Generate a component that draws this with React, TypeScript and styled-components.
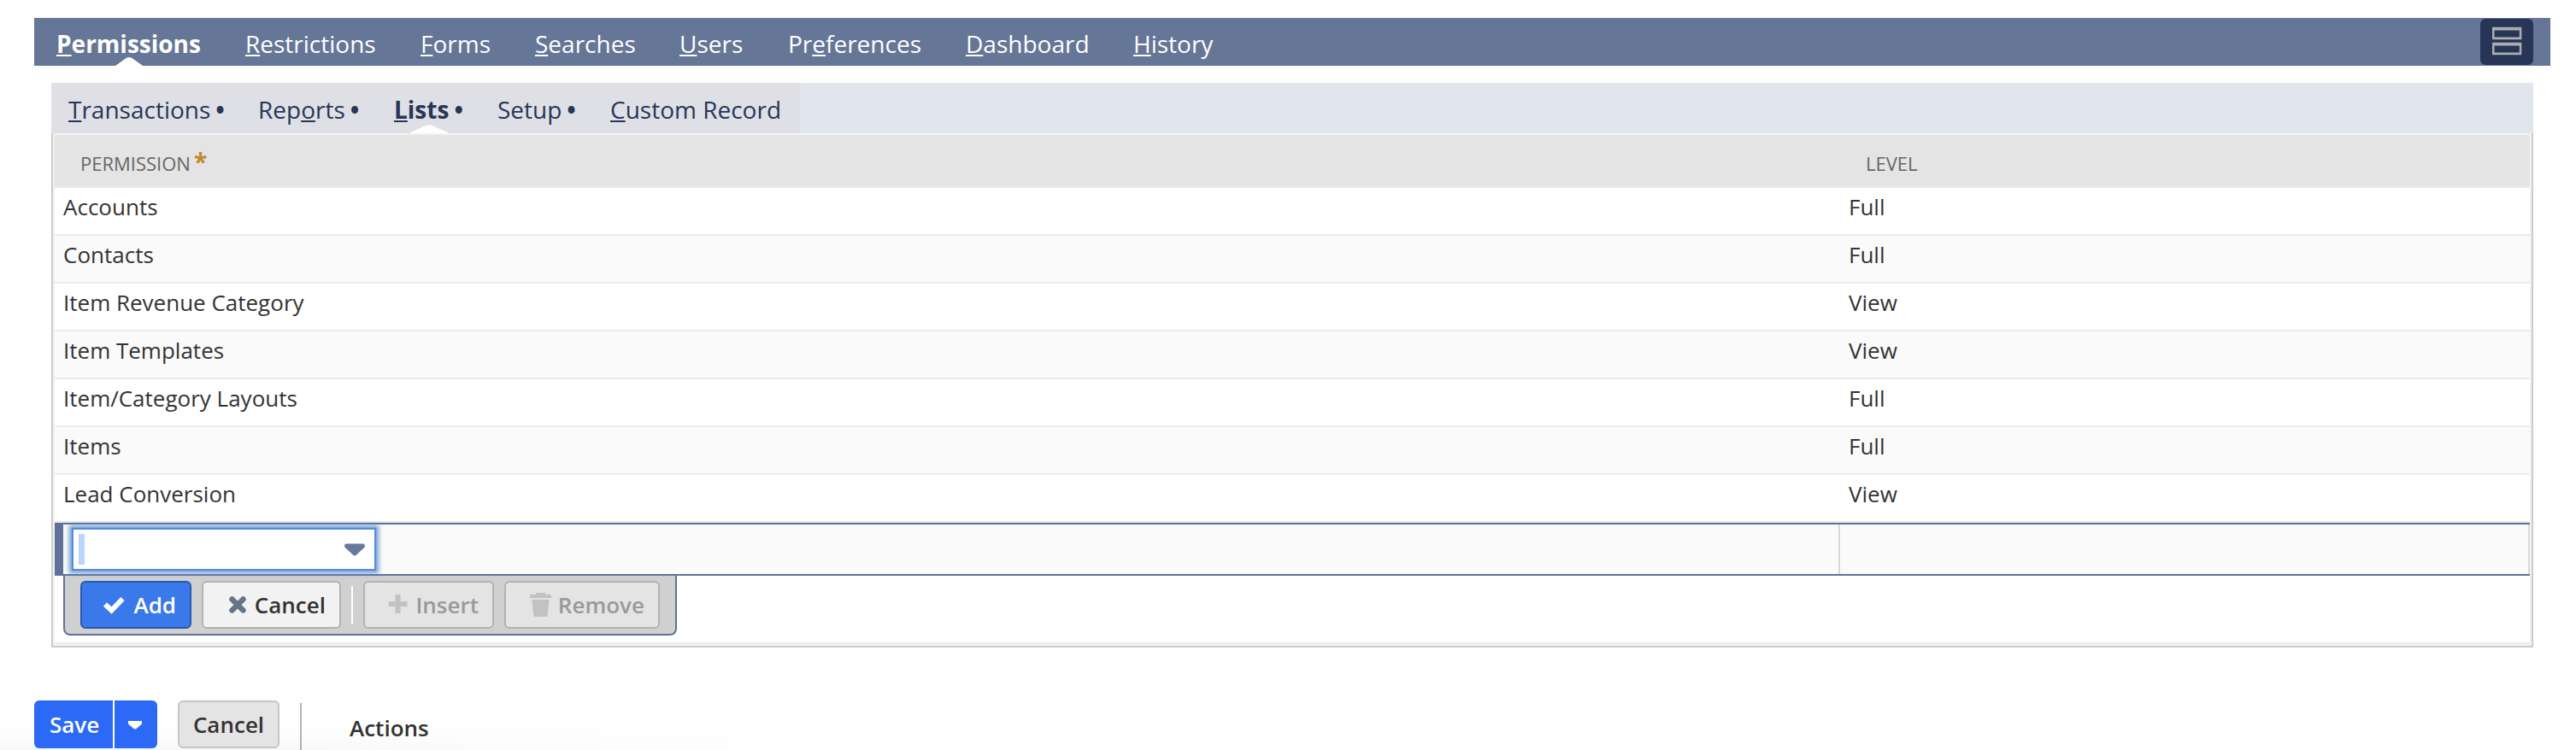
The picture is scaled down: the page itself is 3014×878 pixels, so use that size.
import React from "react";
import styled, { createGlobalStyle, css } from "styled-components";

const GlobalStyle = createGlobalStyle`
  *, *::before, *::after { box-sizing: border-box; }
  html, body { margin: 0; padding: 0; background: #fefefe; }
  body { font-family: "Open Sans", "Noto Sans", sans-serif; color: #333; overflow: hidden; }
  button, input { font-family: inherit; }
`;

const Page = styled.main`
  width: 3014px;
  height: 878px;
  padding: 21px 30px 0 40px;
  overflow: hidden;
  display: flex;
  flex-direction: column;
`;

const NavBar = styled.nav`
  display: flex;
  align-items: flex-start;
  height: 56px;
  padding-left: 26px;
  background: #667696;
`;

const Key = styled.u`
  text-decoration: underline;
  text-decoration-thickness: 2px;
  text-underline-offset: 2px;
  text-decoration-skip-ink: none;
`;

const NavItem = styled.a<{ $active?: boolean; $width: number }>`
  position: relative;
  width: ${(p) => p.$width}px;
  height: 56px;
  padding-top: 16px;
  line-height: 28px;
  font-size: 28px;
  font-weight: ${(p) => (p.$active ? 700 : 400)};
  color: #fff;
  white-space: nowrap;
`;

const Notch = styled.svg<{ $left: number }>`
  position: absolute;
  bottom: 0;
  left: ${(p) => p.$left}px;
`;

const LayoutToggle = styled.button`
  display: flex;
  align-items: flex-start;
  justify-content: flex-start;
  width: 62px;
  height: 54px;
  margin: 1px 20px 0 auto;
  padding: 9px 0 0 14px;
  border: 0;
  border-radius: 6px;
  background: #273657;
`;

const Panel = styled.section`
  margin: 20px 20px 0;
`;

const SubTabs = styled.div`
  height: 59px;
  background: #e0e5ee;
`;

const SubTabGroup = styled.div`
  display: flex;
  width: 876px;
  height: 59px;
  padding-left: 20px;
  background: #dfe0e5;
`;

const SubTab = styled.a<{ $active?: boolean; $width: number }>`
  position: relative;
  width: ${(p) => p.$width}px;
  padding-top: 17px;
  line-height: 28px;
  font-size: 28px;
  font-weight: ${(p) => (p.$active ? 700 : 400)};
  color: #273657;
  white-space: nowrap;
`;

const Bullet = styled.span`
  margin-left: 6px;
  font-weight: 700;
`;

const Sheet = styled.div`
  height: 602px;
  border: 2px solid #ccc;
  border-top: 0;
`;

const SheetInner = styled.div`
  height: 600px;
  border: 2px solid #f2f2f2;
`;

const Grid = styled.div`
  height: 596px;
  border-bottom: 2px solid #ebebeb;
  background: #fff;
`;

const HeadRow = styled.div`
  display: grid;
  grid-template-columns: 2089px 1fr;
  height: 62px;
  background: #e4e4e4;
  border-bottom: 2px solid #ebebeb;
`;

const HeadCell = styled.div`
  display: flex;
  padding: 17px 0 0 30px;
  font-size: 22px;
  line-height: 32px;
  color: #666;
`;

const Required = styled.span`
  margin: -2px 0 0 4px;
  font-size: 28px;
  line-height: 32px;
  font-weight: 700;
  color: #c2882a;
`;

const Row = styled.div<{ $shaded: boolean }>`
  display: grid;
  grid-template-columns: 2089px 1fr;
  height: 56px;
  background: ${(p) => (p.$shaded ? "#fafafa" : "#fff")};
  border-bottom: 2px solid #ebebeb;
`;

const Cell = styled.div`
  padding-left: 10px;
  line-height: 44px;
  font-size: 26px;
`;

const EditRow = styled.div`
  display: grid;
  grid-template-columns: 10px 2079px 1fr;
  height: 62px;
  background: #607199;
`;

const EditCell = styled.div`
  height: 62px;
  padding: 4px 10px;
  border: solid #607199;
  border-width: 2px 0;
  background: linear-gradient(#d9d9d9, #d9d9d9) right / 2px 100% no-repeat #fafafa;
`;

const Combo = styled.div`
  display: flex;
  align-items: flex-start;
  justify-content: space-between;
  width: 356px;
  height: 50px;
  padding: 5px 11px 0 6px;
  border: 2px solid #568dd5;
  background: #fff;
  box-shadow: 0 0 5px 3px rgba(86, 141, 213, 0.85);
`;

const Selection = styled.span`
  width: 7px;
  height: 36px;
  background: #bad6fc;
`;

const ComboArrow = styled.svg`
  margin-top: 11px;
`;

const Tools = styled.div`
  display: flex;
  align-items: flex-start;
  width: 718px;
  height: 70px;
  margin-left: 10px;
  padding: 6px 0 0 18px;
  border: 2px solid #607199;
  border-top: 0;
  border-radius: 0 0 8px 8px;
  background: #d0d0d0;
`;

type Tone = "primary" | "plain" | "disabled";

const tones = {
  primary: css`
    color: #fff;
    background: #3a79ea;
    border-color: #2858b0;
  `,
  plain: css`
    color: #333;
    background: #f2f2f2;
    border-color: #b2b2b2;
  `,
  disabled: css`
    color: #999;
    background: #e4e4e4;
    border-color: #b2b2b2;
  `,
};

const ToolButton = styled.button<{ $tone: Tone; $width: number; $gap: number }>`
  display: flex;
  align-items: center;
  justify-content: flex-end;
  gap: ${(p) => p.$gap}px;
  flex: none;
  width: ${(p) => p.$width}px;
  height: 56px;
  margin-right: 12px;
  padding: 0 16px 0 0;
  border: 2px solid;
  border-radius: 6px;
  font-size: 26px;
  font-weight: 600;
  line-height: 36px;
  ${(p) => tones[p.$tone]}
  svg { flex: none; }
`;

const Separator = styled.span`
  width: 2px;
  height: 44px;
  margin: 6px 12px 0 0;
  background: #fff;
`;

const Footer = styled.footer`
  display: flex;
  align-items: flex-start;
  height: 58px;
  margin: 62px -30px 0 -40px;
  padding-left: 40px;
  background:
    linear-gradient(90deg, rgba(254, 254, 254, 0) 40%, #fefefe) 0 100% / 860px 20px no-repeat,
    linear-gradient(#fefefe, #f8f8f8) 0 100% / 860px 20px no-repeat;
`;

const SaveGroup = styled.div`
  display: flex;
  gap: 2px;
  height: 56px;
  margin-right: 24px;
`;

const SaveButton = styled.button`
  width: 92px;
  padding: 0 0 0 2px;
  border: 0;
  border-radius: 6px 0 0 6px;
  background: #2b69f6;
  color: #fff;
  font-size: 26px;
  font-weight: 600;
`;

const SaveMenu = styled.button`
  display: flex;
  align-items: center;
  width: 50px;
  padding: 2px 0 0 16px;
  border: 0;
  border-radius: 0 6px 6px 0;
  background: #2b69f6;
`;

const CancelButton = styled.button`
  width: 119px;
  height: 56px;
  padding: 0;
  border: 2px solid #c6c6c6;
  border-radius: 6px;
  background: #e4e4e4;
  color: #333;
  font-size: 26px;
  font-weight: 600;
`;

const Divider = styled.span`
  width: 2px;
  height: 55px;
  margin: 3px 56px 0 24px;
  background: #b2b2b2;
`;

const Actions = styled.span`
  padding-top: 14px;
  font-size: 26px;
  line-height: 36px;
  font-weight: 600;
`;

type Label = { pre?: string; key?: string; post: string; width: number };

const navItems: Label[] = [
  { key: "P", post: "ermissions", width: 221 },
  { key: "R", post: "estrictions", width: 205 },
  { key: "F", post: "orms", width: 134 },
  { key: "S", post: "earches", width: 169 },
  { key: "U", post: "sers", width: 127 },
  { pre: "Pr", key: "e", post: "ferences", width: 208 },
  { key: "D", post: "ashboard", width: 196 },
  { key: "H", post: "istory", width: 100 },
];

const subTabs: Label[] = [
  { key: "T", post: "ransactions", width: 222 },
  { pre: "Rep", key: "o", post: "rts", width: 159 },
  { key: "L", post: "ists", width: 121 },
  { post: "Setup", width: 132 },
  { key: "C", post: "ustom Record", width: 220 },
];

const rows = [
  ["Accounts", "Full"],
  ["Contacts", "Full"],
  ["Item Revenue Category", "View"],
  ["Item Templates", "View"],
  ["Item/Category Layouts", "Full"],
  ["Items", "Full"],
  ["Lead Conversion", "View"],
];

const LabelText = ({ label }: { label: Label }) => (
  <>
    {label.pre}
    {label.key && <Key>{label.key}</Key>}
    {label.post}
  </>
);

export default function App() {
  return (
    <>
      <GlobalStyle />
      <Page>
        <NavBar>
          {navItems.map((item, i) => (
            <NavItem key={item.post} $active={i === 0} $width={item.width}>
              <LabelText label={item} />
              {i === 0 && (
                <Notch $left={69} width="32" height="10" viewBox="0 0 32 10">
                  <path d="M0 10 L12.5 1 Q16 -1 19.5 1 L32 10Z" fill="#fefefe" />
                </Notch>
              )}
            </NavItem>
          ))}
          <LayoutToggle aria-label="Toggle layout">
            <svg width="35" height="34" viewBox="0 0 35 34" fill="#adadb1" fillRule="evenodd">
              <path d="M0 0.7 H34.3 V15.2 H0Z M2.5 4.5 V12.5 H31.8 V4.5Z" />
              <path d="M0 18.7 H34.3 V33.2 H0Z M2.5 22.5 V30.5 H31.8 V22.5Z" />
            </svg>
          </LayoutToggle>
        </NavBar>
        <Panel>
          <SubTabs>
            <SubTabGroup>
              {subTabs.map((tab, i) => (
                <SubTab key={tab.post} $active={i === 2} $width={tab.width}>
                  <LabelText label={tab} />
                  {i < 4 && <Bullet>•</Bullet>}
                  {i === 2 && (
                    <Notch $left={19} width="44" height="10" viewBox="0 0 44 10">
                      <path d="M0 10 V9 L18 1 Q22 -0.6 26 1 L44 9 V10Z" fill="#fefefe" />
                    </Notch>
                  )}
                </SubTab>
              ))}
            </SubTabGroup>
          </SubTabs>
          <Sheet>
            <SheetInner>
              <Grid>
                <HeadRow>
                  <HeadCell>
                    PERMISSION<Required>*</Required>
                  </HeadCell>
                  <HeadCell>LEVEL</HeadCell>
                </HeadRow>
                {rows.map(([name, level], i) => (
                  <Row key={name} $shaded={i % 2 === 1}>
                    <Cell>{name}</Cell>
                    <Cell>{level}</Cell>
                  </Row>
                ))}
                <EditRow>
                  <span />
                  <EditCell>
                    <Combo>
                      <Selection />
                      <ComboArrow width="24" height="15" viewBox="0 0 24 15">
                        <path d="M2 0.5 H22 Q24 0.5 24 3 Q24 4.5 22.5 5.8 L13.5 14 Q12 15 10.5 14 L1.5 5.8 Q0 4.5 0 3 Q0 0.5 2 0.5Z" fill="#667a99" />
                      </ComboArrow>
                    </Combo>
                  </EditCell>
                  <EditCell />
                </EditRow>
                <Tools>
                  <ToolButton $tone="primary" $width={130} $gap={9}>
                    <svg width="27" height="22" viewBox="0 0 27 22">
                      <path d="M3 10.5 L10.5 17.5 L23.5 4" fill="none" stroke="#fff" strokeWidth="6" />
                    </svg>
                    Add
                  </ToolButton>
                  <ToolButton $tone="plain" $width={163} $gap={10}>
                    <svg width="20" height="20" viewBox="0 0 20 20">
                      <path d="M3.5 3.5 L16.5 16.5 M16.5 3.5 L3.5 16.5" stroke="#667489" strokeWidth="6.5" strokeLinecap="round" />
                    </svg>
                    Cancel
                  </ToolButton>
                  <Separator />
                  <ToolButton $tone="disabled" $width={153} $gap={9}>
                    <svg width="23" height="24" viewBox="0 0 23 24">
                      <path d="M11.5 0 V22 M0.5 11 H22.5" stroke="#c2c2c2" strokeWidth="6" />
                    </svg>
                    Insert
                  </ToolButton>
                  <ToolButton $tone="disabled" $width={182} $gap={8}>
                    <svg width="25" height="30" viewBox="0 0 25 30">
                      <path d="M7 1 H18 V3 H25 V7 H0 V3 H7Z M2.5 9 H22.5 L20.5 29 H4.5Z" fill="#c2c2c2" />
                    </svg>
                    Remove
                  </ToolButton>
                </Tools>
              </Grid>
            </SheetInner>
          </Sheet>
        </Panel>
        <Footer>
          <SaveGroup>
            <SaveButton>Save</SaveButton>
            <SaveMenu aria-label="Save options">
              <svg width="16" height="10" viewBox="0 0 16 10">
                <path d="M0 0 H16 V3.5 L9.5 9 Q8 10 6.5 9 L0 3.5Z" fill="#fff" />
              </svg>
            </SaveMenu>
          </SaveGroup>
          <CancelButton>Cancel</CancelButton>
          <Divider />
          <Actions>Actions</Actions>
        </Footer>
      </Page>
    </>
  );
}
